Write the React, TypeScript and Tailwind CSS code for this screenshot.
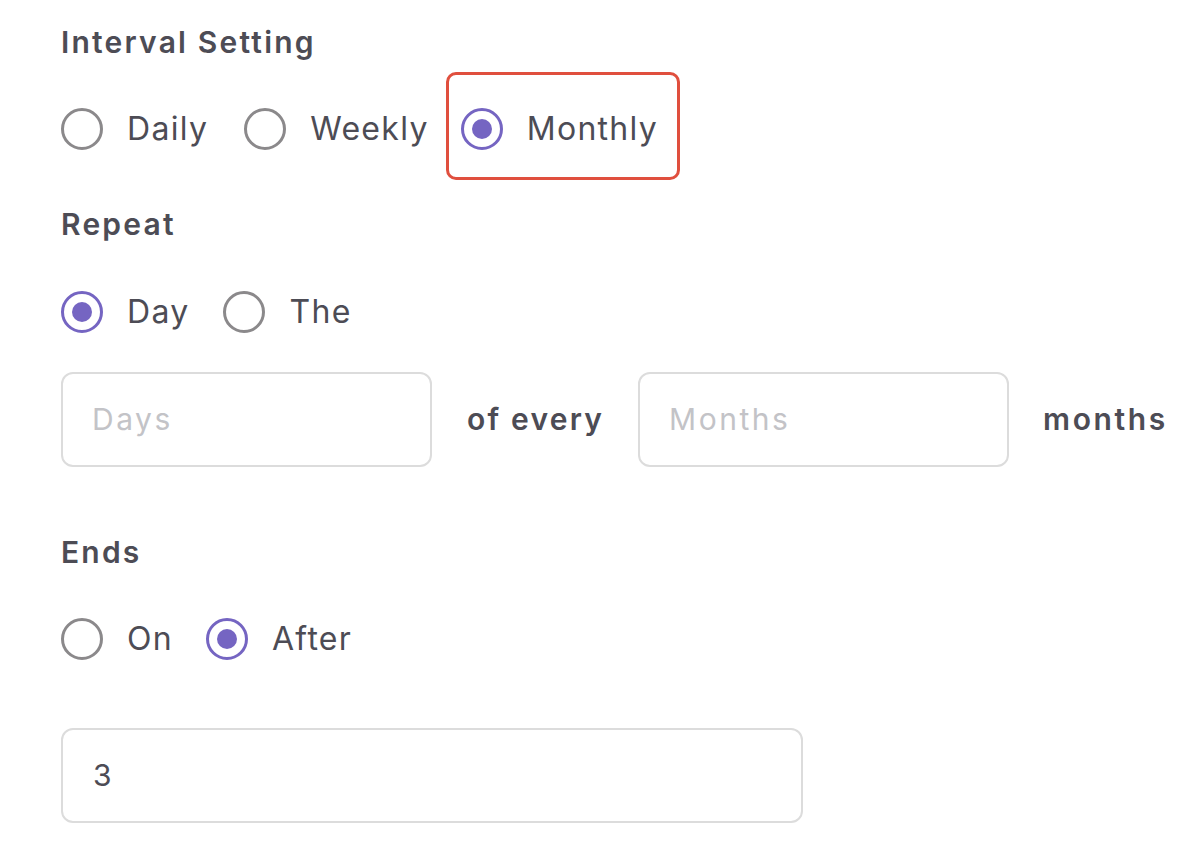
import React from "react";

function Radio({ checked, label, className = "" }: { checked?: boolean; label: string; className?: string }) {
  return (
    <div className={"flex items-center gap-[24px] " + className}>
      {checked ? (
        <span className="flex h-[42px] w-[42px] items-center justify-center rounded-full border-[3.5px] border-[#7565c2] bg-white">
          <span className="h-[20px] w-[20px] rounded-full bg-[#7565c2]" />
        </span>
      ) : (
        <span className="h-[42px] w-[42px] rounded-full border-[3.5px] border-[#8b898b] bg-white" />
      )}
      <span className="text-[32px] leading-none tracking-[1.3px] text-[#4d4c55]">{label}</span>
    </div>
  );
}

export default function App() {
  return (
    <div
      className="h-[845px] w-[1194px] overflow-hidden bg-white pl-[61px] pt-[24px]"
      style={{ fontFamily: "Inter, 'Noto Sans', sans-serif" }}
    >
      <div className="text-[30px] font-semibold leading-[36px] tracking-[2.2px] text-[#4d4c55]">Interval Setting</div>
      <div className="mt-[12px] flex h-[108px] items-center gap-[36px]">
        <Radio label="Daily" className="mt-[6px]" />
        <Radio label="Weekly" className="mt-[6px]" />
        <div className="-ml-[19px] flex h-[108px] items-center rounded-[10px] border-[3px] border-[#e04f3e] pl-[12px] pr-[19px] pt-[6px]">
          <Radio checked label="Monthly" />
        </div>
      </div>
      <div className="mt-[26px] text-[30px] font-semibold leading-[36px] tracking-[2.2px] text-[#4d4c55]">Repeat</div>
      <div className="mt-[49px] flex items-center gap-[34px]">
        <Radio checked label="Day" />
        <Radio label="The" />
      </div>
      <div className="mt-[39px] flex items-center">
        <div className="flex h-[95px] w-[371px] items-center rounded-[12px] border-2 border-[#dcdcdc] pl-[29px] text-[30px] tracking-[2.5px] text-[#c3c3c7]">
          Days
        </div>
        <div className="ml-[35px] text-[30px] font-semibold tracking-[2.2px] text-[#4d4c55]">of every</div>
        <div className="ml-[34px] flex h-[95px] w-[371px] items-center rounded-[12px] border-2 border-[#dcdcdc] pl-[29px] text-[30px] tracking-[2.5px] text-[#c3c3c7]">
          Months
        </div>
        <div className="ml-[34px] text-[30px] font-semibold tracking-[2.6px] text-[#4d4c55]">months</div>
      </div>
      <div className="mt-[67px] text-[30px] font-semibold leading-[36px] tracking-[2.2px] text-[#4d4c55]">Ends</div>
      <div className="mt-[48px] flex items-center gap-[33px]">
        <Radio label="On" />
        <Radio checked label="After" />
      </div>
      <div className="mt-[68px] flex h-[95px] w-[742px] items-center rounded-[12px] border-2 border-[#dcdcdc] pl-[30px] text-[30px] text-[#4d4c55]">
        3
      </div>
    </div>
  );
}
